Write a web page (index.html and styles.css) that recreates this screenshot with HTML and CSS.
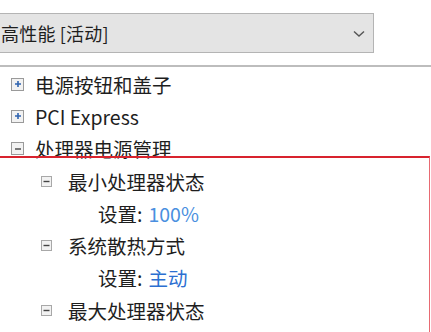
FILE: index.html
```html
<!DOCTYPE html>
<html>
    <head>
        <title>电源选项</title>
        <meta name="viewport" content="width=device-width, initial-scale=1">
        <link rel="stylesheet" href="styles.css">
    </head>
    <body>
        <div class="plan-bar">
            <div class="plan-select">
                <span class="plan-name">高性能 [活动]</span>
                <svg class="chevron" width="12" height="8" viewBox="0 0 12 8">
                    <polyline points="1,1.5 6,6 11,1.5" fill="none" stroke="#555" stroke-width="1.4"/>
                </svg>
            </div>
        </div>
        <div class="divider"></div>

        <div class="tree">
            <div class="row lvl1">
                <span class="toggle plus">
                    <svg width="12" height="12" viewBox="0 0 12 12"><path d="M3 6h6M6 3v6" stroke="#2f63b0" stroke-width="1.6"/></svg>
                </span>
                <span class="label">电源按钮和盖子</span>
            </div>
            <div class="row lvl1">
                <span class="toggle plus">
                    <svg width="12" height="12" viewBox="0 0 12 12"><path d="M3 6h6M6 3v6" stroke="#2f63b0" stroke-width="1.6"/></svg>
                </span>
                <span class="label">PCI Express</span>
            </div>
            <div class="row lvl1">
                <span class="toggle minus">
                    <svg width="12" height="12" viewBox="0 0 12 12"><path d="M3 6h6" stroke="#444" stroke-width="1.4"/></svg>
                </span>
                <span class="label">处理器电源管理</span>
            </div>
            <div class="row lvl2">
                <span class="toggle minus small">
                    <svg width="11" height="11" viewBox="0 0 11 11"><path d="M2.5 5.5h6" stroke="#444" stroke-width="1.4"/></svg>
                </span>
                <span class="label">最小处理器状态</span>
            </div>
            <div class="row lvl3">
                <span class="label">设置:</span>
                <span class="value light">100%</span>
            </div>
            <div class="row lvl2">
                <span class="toggle minus small">
                    <svg width="11" height="11" viewBox="0 0 11 11"><path d="M2.5 5.5h6" stroke="#444" stroke-width="1.4"/></svg>
                </span>
                <span class="label">系统散热方式</span>
            </div>
            <div class="row lvl3">
                <span class="label">设置:</span>
                <span class="value">主动</span>
            </div>
            <div class="row lvl2">
                <span class="toggle minus small">
                    <svg width="11" height="11" viewBox="0 0 11 11"><path d="M2.5 5.5h6" stroke="#444" stroke-width="1.4"/></svg>
                </span>
                <span class="label">最大处理器状态</span>
            </div>
        </div>

        <!-- red highlight round the processor group -->
        <div class="highlight"></div>
    </body>
</html>
```

FILE: styles.css
```css
body{
    margin: 0;
    background-color: #ffffff;
    font-family: "Noto Sans CJK SC", "Noto Sans", sans-serif;
    color: #222222;
    overflow: hidden;
    position: relative;
    height: 332px;
}
.plan-bar{
    padding-top: 13px;
    height: 40px;
}
.plan-select{
    margin-left: -2px;
    width: 376px;
    height: 40px;
    box-sizing: border-box;
    background-color: #e4e4e4;
    border: 1px solid #b4b4b4;
    display: flex;
    align-items: center;
    justify-content: space-between;
    padding-left: 2px;
    padding-right: 8px;
}
.plan-name{
    font-size: 18px;
    letter-spacing: 0.2px;
    color: #1e1e1e;
}
.chevron{
    margin-top: 1px;
}
.divider{
    margin-top: 12px;
    height: 2px;
    background-color: #bdbdbd;
}
.tree{
    padding-top: 1px;
}
.row{
    display: flex;
    align-items: center;
    height: 32.3px;
    font-size: 19.5px;
    white-space: nowrap;
}
.lvl1{
    padding-left: 11px;
}
.lvl2{
    padding-left: 41px;
}
.lvl3{
    padding-left: 98px;
}
.toggle{
    width: 13px;
    height: 13px;
    box-sizing: border-box;
    border: 1px solid #9a9a9a;
    background-color: #f2f2f2;
    display: flex;
    align-items: center;
    justify-content: center;
    margin-right: 11px;
}
.toggle svg{
    display: block;
    flex: none;
}
.toggle.small{
    width: 11px;
    height: 11px;
    margin-right: 16px;
    border-color: #a8a8a8;
}
.label{
    color: #1e1e1e;
}
.value{
    margin-left: 6px;
    color: #2c6fd1;
}
.value.light{
    color: #4a8fe0;
}
.highlight{
    position: absolute;
    left: 0;
    top: 156px;
    width: 430px;
    height: 176px;
    box-sizing: border-box;
    border-top: 2.5px solid #d8232e;
    border-right: 1.5px solid #e86a72;
}
```
